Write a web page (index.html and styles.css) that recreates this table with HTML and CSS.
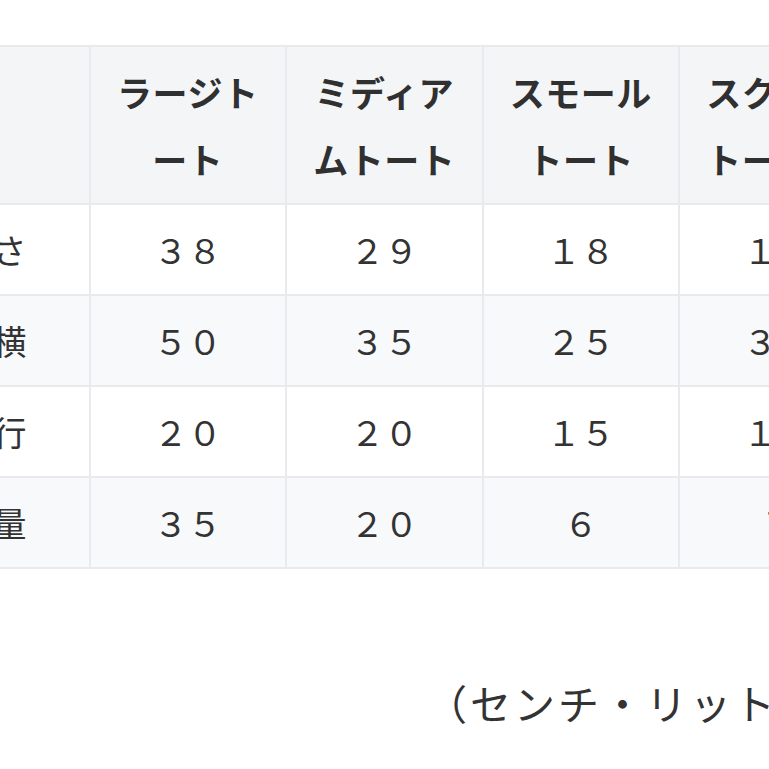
FILE: index.html
```html
<!DOCTYPE html>
<html lang="ja">
<head>
<meta charset="utf-8">
<link rel="stylesheet" href="styles.css">
</head>
<body>
<div class="page">
  <table class="sizes">
    <thead>
      <tr>
        <th class="corner"></th>
        <th>ラージト<br>ート</th>
        <th>ミディア<br>ムトート</th>
        <th>スモール<br>トート</th>
        <th>スクエア<br>トートＳ</th>
      </tr>
    </thead>
    <tbody>
      <tr><td class="label">高さ</td><td>３８</td><td>２９</td><td>１８</td><td>１２</td></tr>
      <tr class="alt"><td class="label">横</td><td>５０</td><td>３５</td><td>２５</td><td>３０</td></tr>
      <tr><td class="label">奥行</td><td>２０</td><td>２０</td><td>１５</td><td>１０</td></tr>
      <tr class="alt"><td class="label">容量</td><td>３５</td><td>２０</td><td>６</td><td>７</td></tr>
    </tbody>
  </table>
  <p class="unit">（センチ・リットル）</p>
</div>
</body>
</html>
```
FILE: styles.css
```css
html, body {
  margin: 0;
  padding: 0;
  background: #ffffff;
  overflow: hidden;
}
body {
  width: 769px;
  height: 769px;
  font-family: "Noto Sans CJK JP", "Noto Sans", sans-serif;
  color: #333333;
}
.page {
  margin-left: -108px;
  padding-top: 45px;
  width: 1200px;
}
.sizes {
  border-collapse: collapse;
  font-size: 34px;
  line-height: 67px;
}
.sizes th,
.sizes td {
  width: 194.5px;
  border: 2px solid #e9eaed;
  text-align: center;
  padding: 11px 0;
  white-space: nowrap;
}
.sizes th {
  background: #f4f5f7;
  font-weight: 700;
  font-size: 35px;
  letter-spacing: 0.5px;
  color: #303030;
}
.sizes td {
  font-weight: 400;
  background: #ffffff;
}
.sizes tr.alt td {
  background: #f8f9fb;
}
.sizes td.label {
  width: 132px;
  text-align: right;
  padding-right: 62px;
}
.unit {
  margin: 100px 0 0;
  padding-left: 534px;
  font-size: 41px;
  letter-spacing: 3px;
  line-height: 67px;
  color: #333333;
  white-space: nowrap;
}
```
